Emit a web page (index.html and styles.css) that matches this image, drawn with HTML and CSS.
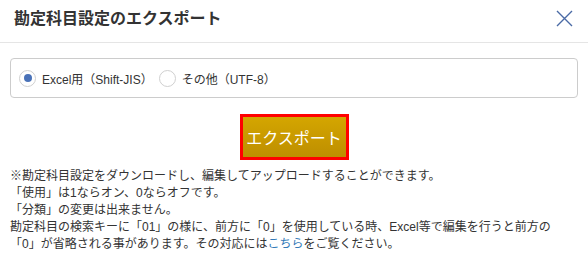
FILE: index.html
```html
<!DOCTYPE html>
<html lang="ja">
<head>
  <meta charset="UTF-8" />
  <title>勘定科目設定のエクスポート</title>
  <link rel="stylesheet" href="styles.css">
</head>
<body>
  <div class="modal">
    <header class="modal-header">
      <h1>勘定科目設定のエクスポート</h1>
      <button class="close" aria-label="close">
        <svg width="17" height="17" viewBox="0 0 17 17">
          <path d="M1 1 L16 16 M16 1 L1 16" stroke="#4a6aa5" stroke-width="1.4" fill="none" />
        </svg>
      </button>
    </header>

    <div class="modal-body">
      <div class="options">
        <label class="radio">
          <input type="radio" name="enc" checked />
          <span class="mark"></span>
          Excel用（Shift-JIS）
        </label>
        <label class="radio">
          <input type="radio" name="enc" />
          <span class="mark"></span>
          その他（UTF-8）
        </label>
      </div>

      <div class="actions">
        <button class="export">エクスポート</button>
      </div>

      <p class="notes">
        ※勘定科目設定をダウンロードし、編集してアップロードすることができます。<br>
        「使用」は1ならオン、0ならオフです。<br>
        「分類」の変更は出来ません。<br>
        勘定科目の検索キーに「01」の様に、前方に「0」を使用している時、Excel等で編集を行うと前方の<br>
        「0」が省略される事があります。その対応には<a href="#">こちら</a>をご覧ください。
      </p>
    </div>
  </div>
</body>
</html>
```

FILE: styles.css
```css
body {
  margin: 0;
  font-family: "Liberation Sans", "Noto Sans CJK JP", sans-serif;
  background-color: #fff;
  color: #333;
}
.modal-header {
  display: flex;
  align-items: center;
  justify-content: space-between;
  height: 42px;
  padding: 0 15px 0 14px;
  border-bottom: 1px solid #e5e5e5;
}
.modal-header h1 {
  margin: 0;
  font-size: 16px;
  font-weight: bold;
  color: #333;
  margin-top: -8px;
}
.close {
  background: none;
  border: none;
  padding: 0;
  cursor: pointer;
  margin-top: -5px;
  line-height: 0;
}
.modal-body {
  padding: 15px 10px 0 10px;
}
.options {
  display: flex;
  align-items: center;
  gap: 6px;
  height: 38px;
  padding: 0 8px;
  border: 1px solid #ccc;
  border-radius: 4px;
}
.radio {
  display: flex;
  align-items: center;
  gap: 6px;
  font-size: 12px;
  color: #333;
  cursor: pointer;
}
.radio input {
  display: none;
}
.mark {
  width: 15px;
  height: 15px;
  border: 1px solid #d0d0d0;
  border-radius: 50%;
  display: flex;
  align-items: center;
  justify-content: center;
  background: #fff;
}
.radio input:checked + .mark::after {
  content: "";
  width: 8px;
  height: 8px;
  border-radius: 50%;
  background-color: #4a72b8;
}
.actions {
  display: flex;
  justify-content: center;
  padding-top: 16px;
}
.export {
  width: 109px;
  height: 46px;
  border: 3px solid #f00;
  background: linear-gradient(#d4a600, #be8e00);
  color: #fff;
  font-family: "Liberation Sans", "Noto Sans CJK JP", sans-serif;
  font-size: 16px;
  cursor: pointer;
  padding: 0;
}
.notes {
  margin: 8px 0 0 0;
  font-size: 12px;
  line-height: 17px;
  color: #333;
}
.notes a {
  color: #337ab7;
  text-decoration: none;
}
```
